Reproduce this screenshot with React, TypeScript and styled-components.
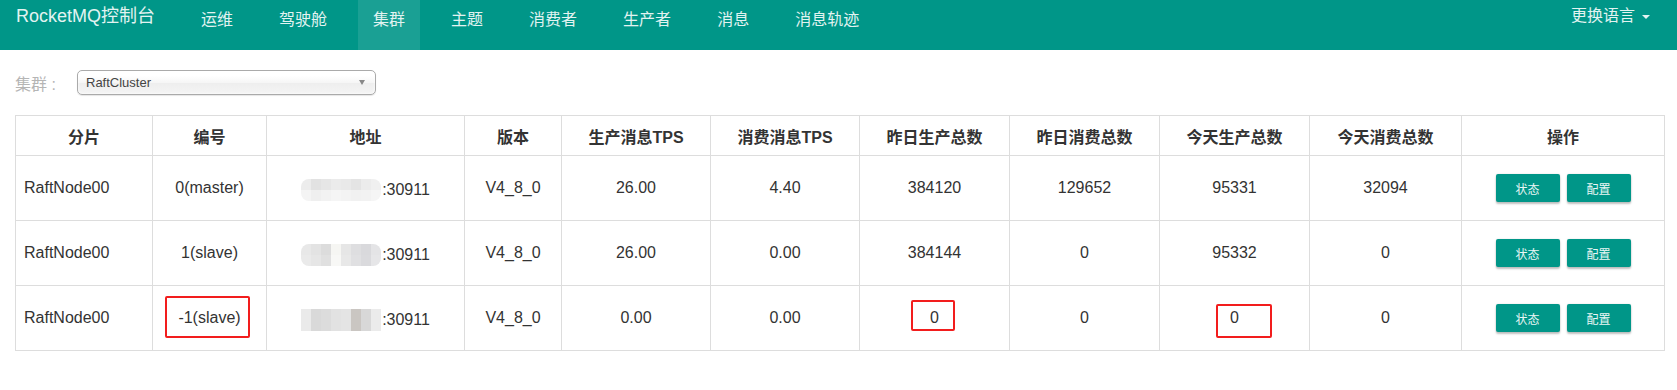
import styled, { createGlobalStyle } from "styled-components";

const GlobalStyle = createGlobalStyle`
  * { box-sizing: border-box; }
  body {
    margin: 0;
    background: #fff;
    font-family: "Liberation Sans", "Noto Sans CJK SC", sans-serif;
    color: #333;
  }
`;

const Navbar = styled.nav`
  height: 50px;
  background: #009688;
  display: flex;
  align-items: stretch;
  padding: 0 12px 0 1px;
`;
const Brand = styled.div`
  font-size: 18px;
  line-height: 20px;
  padding: 6px 15px 0;
  color: #e2f3f1;
`;
const NavList = styled.ul`
  display: flex;
  gap: 16px;
  list-style: none;
  margin: 0 0 0 16px;
  padding: 0;
  flex: 1;
`;
const NavItem = styled.li<{ $active?: boolean }>`
  font-size: 16px;
  line-height: 20px;
  padding: 10px 15px 0;
  color: #e2f3f1;
  background: ${(p) => (p.$active ? "rgba(255,255,255,0.1)" : "transparent")};
`;
const LangMenu = styled.div`
  font-size: 16px;
  line-height: 20px;
  padding: 6px 15px 0;
  color: #e2f3f1;
  display: flex;
  align-items: flex-start;
  gap: 7px;
`;
const Caret = styled.span`
  margin-top: 9px;
  border-top: 4px solid #e2f3f1;
  border-left: 4px solid transparent;
  border-right: 4px solid transparent;
`;

const Content = styled.div`
  padding: 20px 13px 0 15px;
`;
const FilterRow = styled.div`
  display: flex;
  align-items: center;
  height: 25px;
`;
const Label = styled.span`
  width: 62px;
  font-size: 16px;
  color: #b5b5b5;
`;
const Select = styled.div`
  width: 299px;
  height: 25px;
  border: 1px solid #aaa;
  border-radius: 5px;
  background: linear-gradient(#fff 20%, #f6f6f6 50%, #eee 52%, #f4f4f4 100%);
  box-shadow: 0 0 3px #fff inset, 0 1px 1px rgba(0, 0, 0, 0.1);
  display: flex;
  align-items: center;
  justify-content: space-between;
  padding: 0 10px 0 8px;
  font-size: 13px;
  color: #444;
`;
const SelectArrow = styled.span`
  border-top: 5px solid #888;
  border-left: 3.5px solid transparent;
  border-right: 3.5px solid transparent;
`;

const Table = styled.table`
  margin-top: 20px;
  width: 100%;
  border-collapse: collapse;
  table-layout: fixed;
  font-size: 16px;
`;
const Th = styled.th`
  height: 40px;
  border: 1px solid #ddd;
  font-weight: bold;
  color: #333;
  padding: 0 4px;
  text-align: center;
`;
const Td = styled.td<{ $left?: boolean }>`
  position: relative;
  height: 65px;
  border: 1px solid #ddd;
  padding: 0 8px;
  text-align: ${(p) => (p.$left ? "left" : "center")};
  color: #333;
`;

const Address = styled.span`
  display: inline-flex;
  align-items: center;
`;
const Mosaic = styled.span<{ $round: boolean }>`
  display: inline-grid;
  grid-template-columns: repeat(8, 10px);
  grid-template-rows: 11px 11px;
  overflow: hidden;
  border-radius: ${(p) => (p.$round ? "8px" : "0")};
  margin-right: 1px;
`;
const Tile = styled.span<{ $c: string }>`
  background: ${(p) => p.$c};
`;

const Buttons = styled.div`
  display: flex;
  justify-content: center;
  gap: 7px;
`;
const Button = styled.button`
  width: 64px;
  height: 28px;
  border: none;
  border-radius: 2px;
  background: #009688;
  color: #eaf6f5;
  font-size: 12px;
  font-family: inherit;
  box-shadow: 0 2px 2px rgba(0, 0, 0, 0.24), 0 0 2px rgba(0, 0, 0, 0.12);
`;

const Mark = styled.span<{ $l: number; $t: number; $w: number; $h: number }>`
  position: absolute;
  left: ${(p) => p.$l}px;
  top: ${(p) => p.$t}px;
  width: ${(p) => p.$w}px;
  height: ${(p) => p.$h}px;
  border: 2px solid #f21d1d;
  border-radius: 2px;
`;

const navItems = ["运维", "驾驶舱", "集群", "主题", "消费者", "生产者", "消息", "消息轨迹"];
const headers = [
  "分片", "编号", "地址", "版本", "生产消息TPS", "消费消息TPS",
  "昨日生产总数", "昨日消费总数", "今天生产总数", "今天消费总数", "操作",
];
const colWidths = [137, 114, 198, 97, 149, 149, 150, 150, 150, 152, 203];

const mosaics = [
  {
    round: true,
    tiles: [
      "#ececec", "#e2e2e2", "#e6e6e6", "#ebebeb", "#e9e9e9", "#e4e4e4", "#ececec", "#f0f0f0",
      "#f4f4f4", "#efefef", "#f2f2f2", "#f5f5f5", "#f3f3f3", "#f1f1f1", "#f2f2f2", "#f5f5f5",
    ],
  },
  {
    round: true,
    tiles: [
      "#e8e8e8", "#e3e3e3", "#dcdcdc", "#f6f6f3", "#e6e6e6", "#dedee0", "#d9d9dc", "#e4e4e6",
      "#eaeaea", "#e6e6e6", "#e0e0e0", "#f8f8f6", "#e8e8e8", "#e0e0e2", "#dadadd", "#e6e6e8",
    ],
  },
  {
    round: false,
    tiles: [
      "#eaeaea", "#d9d9d9", "#dcdcdc", "#e2e2e2", "#e4e4e4", "#cac6c2", "#d8d8d8", "#ebebeb",
      "#eaeaea", "#d9d9d9", "#dcdcdc", "#e2e2e2", "#e4e4e4", "#cac6c2", "#d8d8d8", "#ebebeb",
    ],
  },
];

type Row = {
  id: string;
  prodTps: string;
  consTps: string;
  yProd: string;
  yCons: string;
  tProd: string;
  tCons: string;
};

const rows: Row[] = [
  { id: "0(master)", prodTps: "26.00", consTps: "4.40", yProd: "384120", yCons: "129652", tProd: "95331", tCons: "32094" },
  { id: "1(slave)", prodTps: "26.00", consTps: "0.00", yProd: "384144", yCons: "0", tProd: "95332", tCons: "0" },
  { id: "-1(slave)", prodTps: "0.00", consTps: "0.00", yProd: "0", yCons: "0", tProd: "0", tCons: "0" },
];

const App = () => {
  return (
    <>
      <GlobalStyle />
      <Navbar>
        <Brand>RocketMQ控制台</Brand>
        <NavList>
          {navItems.map((item) => (
            <NavItem key={item} $active={item === "集群"}>
              {item}
            </NavItem>
          ))}
        </NavList>
        <LangMenu>
          更换语言
          <Caret />
        </LangMenu>
      </Navbar>
      <Content>
        <FilterRow>
          <Label>集群 :</Label>
          <Select>
            <span>RaftCluster</span>
            <SelectArrow />
          </Select>
        </FilterRow>
        <Table>
          <colgroup>
            {colWidths.map((w, i) => (
              <col key={i} style={{ width: w }} />
            ))}
          </colgroup>
          <thead>
            <tr>
              {headers.map((h) => (
                <Th key={h}>{h}</Th>
              ))}
            </tr>
          </thead>
          <tbody>
            {rows.map((r, i) => {
              const flagged = i === 2;
              return (
                <tr key={r.id}>
                  <Td $left>RaftNode00</Td>
                  <Td>
                    {r.id}
                    {flagged && <Mark $l={12} $t={10} $w={85} $h={42} />}
                  </Td>
                  <Td>
                    <Address>
                      <Mosaic $round={mosaics[i].round}>
                        {mosaics[i].tiles.map((c, j) => (
                          <Tile key={j} $c={c} />
                        ))}
                      </Mosaic>
                      :30911
                    </Address>
                  </Td>
                  <Td>V4_8_0</Td>
                  <Td>{r.prodTps}</Td>
                  <Td>{r.consTps}</Td>
                  <Td>
                    {r.yProd}
                    {flagged && <Mark $l={51} $t={14} $w={44} $h={31} />}
                  </Td>
                  <Td>{r.yCons}</Td>
                  <Td>
                    {r.tProd}
                    {flagged && <Mark $l={56} $t={18} $w={56} $h={34} />}
                  </Td>
                  <Td>{r.tCons}</Td>
                  <Td>
                    <Buttons>
                      <Button>状态</Button>
                      <Button>配置</Button>
                    </Buttons>
                  </Td>
                </tr>
              );
            })}
          </tbody>
        </Table>
      </Content>
    </>
  );
};

export default App;
